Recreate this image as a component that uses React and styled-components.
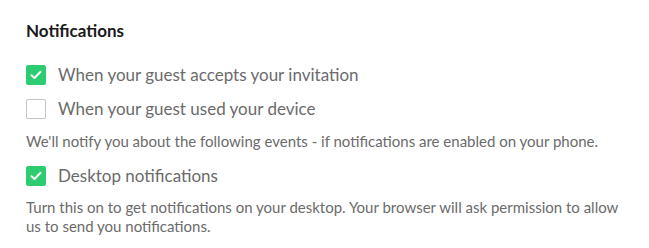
import React, { useState } from "react";
import styled, { createGlobalStyle } from "styled-components";

const GlobalStyle = createGlobalStyle`
    body {
        margin: 0;
        background: #ffffff;
        font-family: Lato, "Open Sans", sans-serif;
    }
`;

const Section = styled.div`
    width: 600px;
    padding: 20px 26px 0 26px;
`;

const Title = styled.h2`
    margin: 0 0 23px 0;
    font-size: 17px;
    font-weight: 700;
    color: #1a1a1a;
    line-height: 22px;
`;

const Option = styled.label`
    display: flex;
    align-items: center;
    gap: 12px;
    height: 20px;
    margin-bottom: ${(p) => p.$gap || 14}px;
    cursor: pointer;
`;

const Box = styled.span`
    box-sizing: border-box;
    width: 20px;
    height: 20px;
    border-radius: 2px;
    display: flex;
    align-items: center;
    justify-content: center;
    background: ${(p) => (p.$checked ? "#2ecc71" : "#ffffff")};
    border: 1px solid ${(p) => (p.$checked ? "#2ecc71" : "#c4c4c4")};
`;

const Label = styled.span`
    font-size: 17px;
    color: #6b6b6b;
    line-height: 20px;
`;

const Hint = styled.p`
    margin: 0 0 ${(p) => p.$gap || 0}px 0;
    font-size: 15px;
    line-height: 19px;
    color: #6b6b6b;
`;

function Check({ checked, onClick, gap, children }) {
    return (
        <Option onClick={onClick} $gap={gap}>
            <Box $checked={checked}>
                {checked && (
                    <svg width="12" height="10" viewBox="0 0 12 10">
                        <path d="M1.5 5.2 L4.5 8 L10.5 1.8" fill="none" stroke="#fff" strokeWidth="2" strokeLinecap="round" strokeLinejoin="round" />
                    </svg>
                )}
            </Box>
            <Label>{children}</Label>
        </Option>
    );
}

export default function App() {
    const [state, setState] = useState({ accept: true, used: false, desktop: true });
    const toggle = (k) => () => setState((s) => ({ ...s, [k]: !s[k] }));
    return (
        <>
            <GlobalStyle />
            <Section>
                <Title>Notifications</Title>
                <Check checked={state.accept} onClick={toggle("accept")} gap={14}>When your guest accepts your invitation</Check>
                <Check checked={state.used} onClick={toggle("used")} gap={13}>When your guest used your device</Check>
                <Hint $gap={15}>We'll notify you about the following events - if notifications are enabled on your phone.</Hint>
                <Check checked={state.desktop} onClick={toggle("desktop")} gap={12}>Desktop notifications</Check>
                <Hint>Turn this on to get notifications on your desktop. Your browser will ask permission to allow us to send you notifications.</Hint>
            </Section>
        </>
    );
}
